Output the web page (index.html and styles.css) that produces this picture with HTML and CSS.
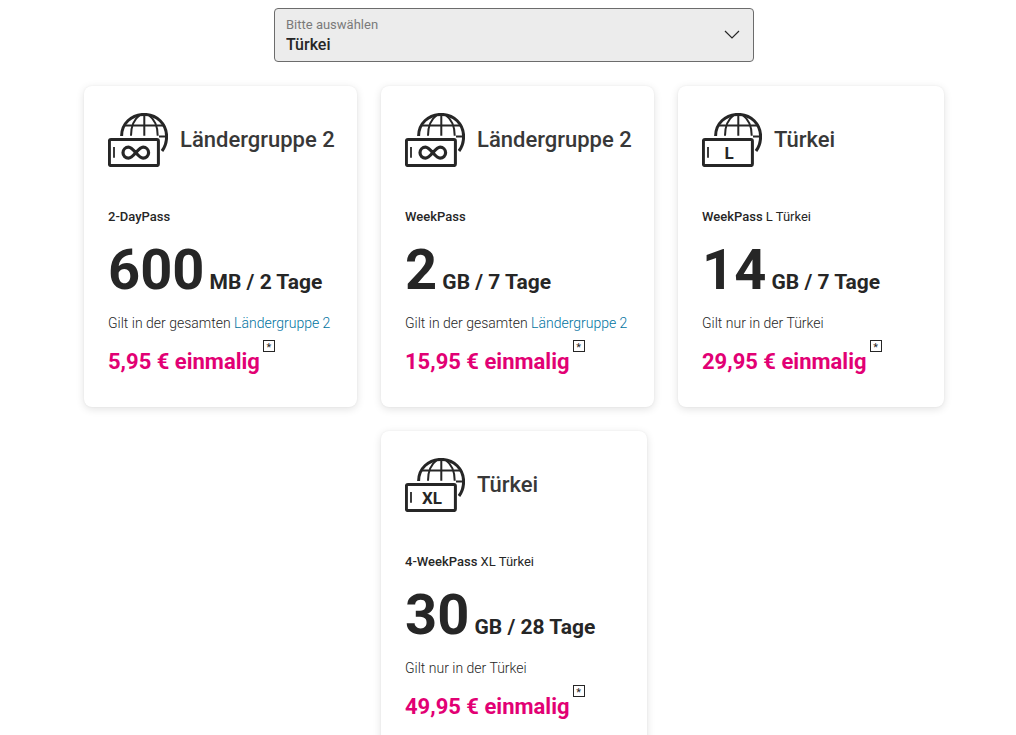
FILE: index.html
```html
<!DOCTYPE html>
<html lang="de">
<head>
<meta charset="utf-8">
<meta name="viewport" content="width=device-width, initial-scale=1">
<title>Travel-Pässe Türkei</title>
<link rel="stylesheet" href="styles.css">
</head>
<body>
<svg class="sprite" aria-hidden="true">
  <symbol id="globe-phone" viewBox="0 0 60 54">
    <g fill="none" stroke="#262626">
      <path d="M13.600 23C13.600 10.500 23.500 1.400 36.200 1.400C48.900 1.400 58.600 11 58.600 23.500C58.600 29 57 34 54 38" stroke-width="3"/>
      <path d="M36.300 2V22.700M16 12.400H56.500M51 23.500H58M32 2C25.500 6.500 23 14 23 22.700M40.500 2C47 6.500 49.700 14 49.700 22.700" stroke-width="2"/>
      <rect x="1.400" y="26.400" width="49" height="26.200" rx="1.500" stroke-width="3"/>
      <path d="M6 34V44.700" stroke-width="1.800"/>
    </g>
  </symbol>
  <symbol id="infinity" viewBox="0 0 60 54">
    <path d="M27.800 39.700C25 36.500 23 34.200 20.500 34.200A5.500 5.500 0 0 0 20.500 45.200C23 45.200 25 42.900 27.800 39.700C30.600 36.500 32.600 34.200 35.100 34.200A5.500 5.500 0 0 1 35.100 45.200C32.600 45.200 30.600 42.900 27.800 39.700Z" fill="none" stroke="#262626" stroke-width="3.200"/>
  </symbol>
</svg>
<main class="page">
  <div class="picker">
    <label class="picker-label" for="country">Bitte auswählen</label>
    <select class="picker-select" id="country"><option>Türkei</option></select>
    <svg class="picker-arrow" viewBox="0 0 16 9" aria-hidden="true"><path d="M1 1l7 7 7-7" fill="none" stroke="#262626" stroke-width="1.200"/></svg>
  </div>
  <div class="cards">
    <article class="card card-wide">
      <header class="card-head">
        <svg class="icon" viewBox="0 0 60 54" aria-hidden="true"><use href="#globe-phone"/><use href="#infinity"/></svg>
        <h2 class="card-title">Ländergruppe 2</h2>
      </header>
      <p class="pass">2-DayPass</p>
      <p class="volume"><span class="amount">600</span> MB / 2 Tage</p>
      <p class="scope">Gilt in der gesamten <a class="link" href="#">Ländergruppe 2</a></p>
      <p class="price">5,95 € einmalig<a class="note" href="#">*</a></p>
    </article>
    <article class="card card-wide">
      <header class="card-head">
        <svg class="icon" viewBox="0 0 60 54" aria-hidden="true"><use href="#globe-phone"/><use href="#infinity"/></svg>
        <h2 class="card-title">Ländergruppe 2</h2>
      </header>
      <p class="pass">WeekPass</p>
      <p class="volume"><span class="amount">2</span> GB / 7 Tage</p>
      <p class="scope">Gilt in der gesamten <a class="link" href="#">Ländergruppe 2</a></p>
      <p class="price">15,95 € einmalig<a class="note" href="#">*</a></p>
    </article>
    <article class="card">
      <header class="card-head">
        <svg class="icon" viewBox="0 0 60 54" aria-hidden="true"><use href="#globe-phone"/><text class="icon-text" x="27" y="46">L</text></svg>
        <h2 class="card-title">Türkei</h2>
      </header>
      <p class="pass">WeekPass <span class="region">L Türkei</span></p>
      <p class="volume"><span class="amount">14</span> GB / 7 Tage</p>
      <p class="scope">Gilt nur in der Türkei</p>
      <p class="price">29,95 € einmalig<a class="note" href="#">*</a></p>
    </article>
    <article class="card">
      <header class="card-head">
        <svg class="icon" viewBox="0 0 60 54" aria-hidden="true"><use href="#globe-phone"/><text class="icon-text" x="27" y="46">XL</text></svg>
        <h2 class="card-title">Türkei</h2>
      </header>
      <p class="pass">4-WeekPass <span class="region">XL Türkei</span></p>
      <p class="volume"><span class="amount">30</span> GB / 28 Tage</p>
      <p class="scope">Gilt nur in der Türkei</p>
      <p class="price">49,95 € einmalig<a class="note" href="#">*</a></p>
    </article>
  </div>
</main>
</body>
</html>
```
FILE: styles.css
```css
* {
  box-sizing: border-box;
}

html {
  scrollbar-width: none;
}

body {
  margin: 0;
  background: #fff;
  color: #262626;
  font-family: Roboto, "Liberation Sans", sans-serif;
}

h2,
p {
  margin: 0;
}

.sprite {
  display: none;
}

.page {
  padding: 8px 0 24px 12px;
}

.picker {
  position: relative;
  max-width: 480px;
  margin: 0 auto 24px;
}

.picker-label {
  position: absolute;
  top: 9px;
  left: 12px;
  font-size: 13px;
  line-height: 16px;
  color: #7a7a7a;
  pointer-events: none;
}

.picker-select {
  display: block;
  width: 100%;
  height: 54px;
  padding: 19px 40px 0 11px;
  appearance: none;
  border: 1px solid #6c6c6c;
  border-radius: 4px;
  background: #ececec;
  color: #262626;
  font: 500 16px/20px Roboto, "Liberation Sans", sans-serif;
}

.picker-arrow {
  position: absolute;
  top: 22px;
  right: 14px;
  width: 16px;
  height: 9px;
  pointer-events: none;
}

.cards {
  display: flex;
  flex-wrap: wrap;
  justify-content: center;
  gap: 24px;
  max-width: 872px;
  margin: 0 auto;
}

.card {
  flex: 0 0 266px;
  min-width: 0;
  padding: 24px;
  border-radius: 8px;
  background: #fff;
  box-shadow: 0 2px 8px rgba(0, 0, 0, 0.12), 0 0 2px rgba(0, 0, 0, 0.06);
}

.card-wide {
  flex-basis: 273px;
}

.card-head {
  display: flex;
  align-items: center;
  gap: 12px;
  height: 60px;
}

.icon {
  flex: none;
  width: 60px;
  height: 54px;
}

.icon-text {
  font-size: 17px;
  font-weight: 700;
  text-anchor: middle;
  fill: #262626;
}

.card-title {
  font-size: 22px;
  line-height: 28px;
  font-weight: 500;
  color: #383838;
  white-space: nowrap;
}

.pass {
  margin-top: 36px;
  font-size: 13px;
  line-height: 22px;
  font-weight: 500;
}

.region {
  font-weight: 400;
}

.volume {
  margin-top: 10px;
  font-size: 21px;
  line-height: 64px;
  font-weight: 700;
  white-space: nowrap;
}

.amount {
  font-size: 56px;
}

.scope {
  font-size: 14px;
  line-height: 18px;
  font-weight: 300;
  white-space: nowrap;
}

.link {
  color: #00739f;
  text-decoration: none;
}

.price {
  display: flex;
  align-items: flex-start;
  gap: 3px;
  margin-top: 8px;
  font-size: 22px;
  line-height: 43px;
  font-weight: 700;
  color: #e20074;
}

.note {
  width: 12px;
  height: 12px;
  border: 1px solid #262626;
  color: #262626;
  font-size: 11px;
  line-height: 13px;
  font-weight: 400;
  text-align: center;
  text-decoration: none;
}
```
